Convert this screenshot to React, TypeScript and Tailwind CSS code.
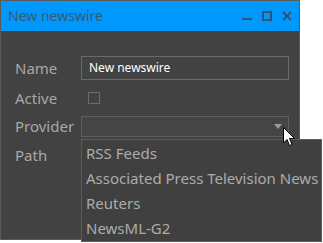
import { useState } from "react";

const providers = [
  "RSS Feeds",
  "Associated Press Television News",
  "Reuters",
  "NewsML-G2",
];

function TitleBar() {
  return (
    <div className="h-[30px] bg-[#0098fa] flex items-center pl-[7px] pr-[7px]">
      <span className="text-[14px] text-[#3a5a75] font-['Noto_Sans',sans-serif] leading-none">
        New newswire
      </span>
      <div className="ml-auto flex items-center gap-[10px] text-[#2f5677]">
        {/* minimize */}
        <svg width="10" height="10" viewBox="0 0 10 10">
          <rect x="0" y="7" width="10" height="2" fill="currentColor" />
        </svg>
        {/* maximize */}
        <svg width="10" height="10" viewBox="0 0 10 10">
          <rect x="1" y="1" width="8" height="8" fill="none" stroke="currentColor" strokeWidth="2" />
        </svg>
        {/* close */}
        <svg width="10" height="10" viewBox="0 0 10 10">
          <path d="M1 1 L9 9 M9 1 L1 9" stroke="currentColor" strokeWidth="2" />
        </svg>
      </div>
    </div>
  );
}

export default function App() {
  const [active, setActive] = useState(false);

  return (
    <div className="relative w-[323px] h-[243px] bg-white overflow-hidden font-['Noto_Sans',sans-serif]">
      {/* Window */}
      <div className="w-[300px] h-[240px] border border-[#5a5a5a] bg-[#424242] flex flex-col">
        <TitleBar />
        <div className="pt-[25px] pl-[14px] pr-[10px] grid grid-cols-[66px_1fr] grid-rows-[24px_36px_21px_36px] items-center text-[15px] text-[#a8a8a8]">
          <span>Name</span>
          <div className="h-[24px] border border-[#6a6a6a] flex items-center px-[7px] text-[12px] text-white">
            New newswire
          </div>

          <span>Active</span>
          <button
            onClick={() => setActive(!active)}
            className="ml-[7px] w-[12px] h-[12px] border border-[#6a6a6a]"
          />

          <span>Provider</span>
          <div className="h-[21px] border border-[#5e5e5e] bg-[#454545] flex items-center justify-end pr-[6px]">
            <svg width="8" height="5" viewBox="0 0 8 5">
              <path d="M0 0 H8 L4 5 Z" fill="#9a9a9a" />
            </svg>
          </div>

          <span>Path</span>
          <div />
        </div>
      </div>

      {/* Dropdown list */}
      <div className="absolute left-[81px] top-[139px] w-[241px] h-[103px] bg-[#404040] border border-[#5c5c5c] py-[1px]">
        {providers.map((p) => (
          <div key={p} className="h-[25px] flex items-center pl-[4px] text-[15px] text-[#acacac] whitespace-nowrap">
            {p}
          </div>
        ))}
      </div>

      {/* Mouse cursor */}
      <svg className="absolute left-[283px] top-[127px]" width="13" height="20" viewBox="0 0 13 20">
        <path d="M0.5 0.5 V16 L4 12.5 L6.5 18.5 L9 17.5 L6.5 11.5 H11.5 Z" fill="white" stroke="black" strokeWidth="1" />
      </svg>
    </div>
  );
}
